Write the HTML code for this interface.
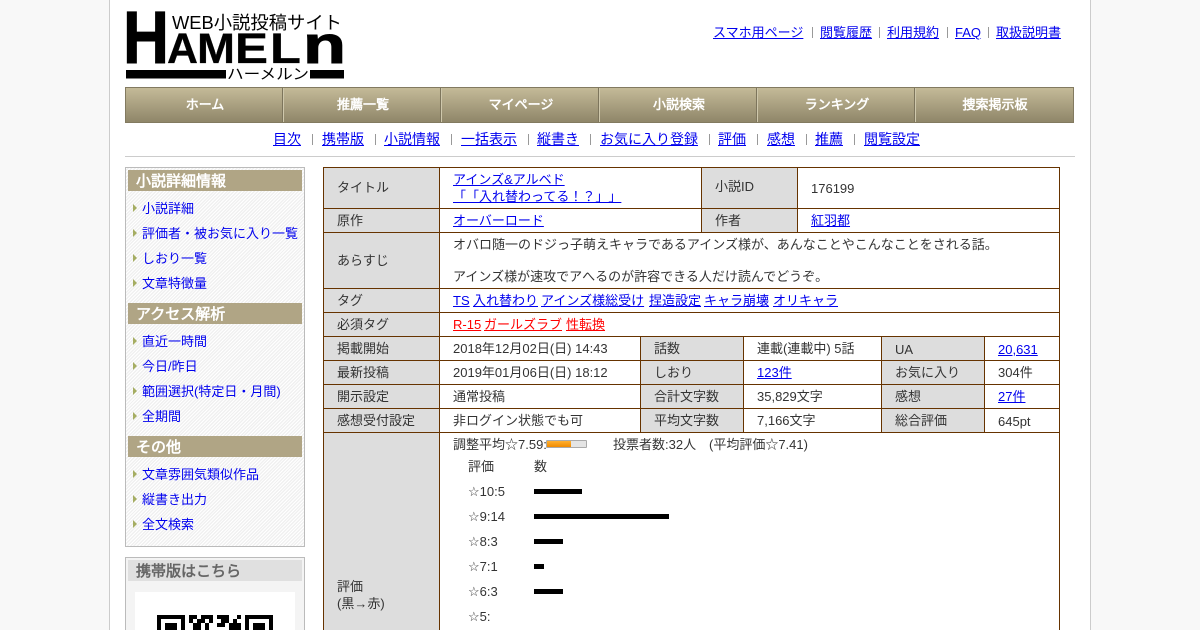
<!DOCTYPE html>
<html lang="ja"><head><meta charset="utf-8"><title>Hameln</title>
<style>
html,body{margin:0;padding:0;width:1200px;height:630px;overflow:hidden;background:#f8f8f8}
body{position:relative;font-family:"Liberation Sans","WenQuanYi Zen Hei",sans-serif;text-spacing-trim:space-all;font-size:13px;color:#333}
#w{position:absolute;left:109px;top:0;width:980px;height:630px;background:#fff;border-left:1px solid #ccc;border-right:1px solid #ccc}
.a,a.a,span.a{position:absolute;white-space:nowrap;line-height:16px;height:16px;margin-top:1px}
a.f{margin-top:0}
a[style*="text-decoration:none"]{margin-top:0}
a{color:#00e;text-decoration:underline}
.d{font-family:"Noto Sans CJK JP",sans-serif;line-height:0}
.r{position:absolute}
.s{position:absolute;width:1px;height:11px;background:#999}
.n{position:absolute;top:88px;height:34px;line-height:33px;width:154px;padding-left:2px;text-align:center;color:#fff;font-weight:bold;font-size:13px;border-left:1px solid #cfc8ac;border-right:1px solid #7d755c}
.f{font-size:14px}
.h{position:absolute;left:128px;width:174px;height:21px;line-height:23px;background:#b0a585;color:#fff;font-weight:bold;font-size:15px;text-indent:8px}
.ar{position:absolute;left:133px;width:0;height:0;border-left:4px solid #a5ad62;border-top:4px solid transparent;border-bottom:4px solid transparent}
.g{position:absolute;background:#ddd}
.l{position:absolute;background:#630}
.b{position:absolute;left:534px;height:5px;background:#000}
.q{position:absolute;background:#000}
</style></head><body>
<div id="w"></div>

<svg class="r" style="left:120px;top:5px" width="230" height="80" viewBox="120 5 230 80">
<g font-family="Liberation Sans" font-weight="bold" fill="#000" stroke="#000">
<text x="123" y="63" font-size="74" textLength="46" lengthAdjust="spacingAndGlyphs">H</text>
<text x="167" y="63" font-size="43" textLength="31" lengthAdjust="spacingAndGlyphs" stroke-width="0.3">A</text>
<text x="197" y="63" font-size="43" textLength="38" lengthAdjust="spacingAndGlyphs" stroke-width="0.3">M</text>
<text x="235" y="63" font-size="43" textLength="33" lengthAdjust="spacingAndGlyphs" stroke-width="0.3">E</text>
<text x="270" y="63" font-size="43" textLength="31" lengthAdjust="spacingAndGlyphs" stroke-width="0.3">L</text>
<text x="303" y="63" font-size="53" textLength="43" lengthAdjust="spacingAndGlyphs">n</text>
</g>
<text x="172" y="29" font-size="18" fill="#000" textLength="170" lengthAdjust="spacingAndGlyphs">WEB小説投稿サイト</text>
<rect x="126" y="70" width="100" height="8.5" fill="#000"/><rect x="310" y="70" width="34" height="8.5" fill="#000"/>
<text x="227" y="79" font-size="15" fill="#000" textLength="82" lengthAdjust="spacingAndGlyphs">ハーメルン</text>
</svg>

<a class="a" href="#" style="left:713px;top:24px">スマホ用ページ</a><i class="s" style="left:812px;top:27px"></i>
<a class="a" href="#" style="left:820px;top:24px">閲覧履歴</a><i class="s" style="left:879px;top:27px"></i>
<a class="a" href="#" style="left:887px;top:24px">利用規約</a><i class="s" style="left:947px;top:27px"></i>
<a class="a" href="#" style="left:955px;top:24px">FAQ</a><i class="s" style="left:988px;top:27px"></i>
<a class="a" href="#" style="left:996px;top:24px">取扱説明書</a>

<div class="r" style="left:125px;top:87px;width:947px;height:34px;border:1px solid #827a60;background:linear-gradient(#c4ba98,#8f8669)"></div>
<div class="n" style="left:125px;border-left-color:transparent">ホーム</div>
<div class="n" style="left:283px">推薦一覧</div>
<div class="n" style="left:441px">マイページ</div>
<div class="n" style="left:599px">小説検索</div>
<div class="n" style="left:757px">ランキング</div>
<div class="n" style="left:915px;border-right-color:transparent">捜索掲示板</div>

<a class="a f" href="#" style="left:273px;top:131px">目次</a><i class="s" style="left:312px;top:134px"></i>
<a class="a f" href="#" style="left:322px;top:131px">携帯版</a><i class="s" style="left:375px;top:134px"></i>
<a class="a f" href="#" style="left:384px;top:131px">小説情報</a><i class="s" style="left:451px;top:134px"></i>
<a class="a f" href="#" style="left:461px;top:131px">一括表示</a><i class="s" style="left:528px;top:134px"></i>
<a class="a f" href="#" style="left:537px;top:131px">縦書き</a><i class="s" style="left:590px;top:134px"></i>
<a class="a f" href="#" style="left:600px;top:131px">お気に入り登録</a><i class="s" style="left:709px;top:134px"></i>
<a class="a f" href="#" style="left:718px;top:131px">評価</a><i class="s" style="left:757px;top:134px"></i>
<a class="a f" href="#" style="left:767px;top:131px">感想</a><i class="s" style="left:806px;top:134px"></i>
<a class="a f" href="#" style="left:815px;top:131px">推薦</a><i class="s" style="left:854px;top:134px"></i>
<a class="a f" href="#" style="left:864px;top:131px">閲覧設定</a>
<div class="r" style="left:125px;top:156px;width:950px;height:1px;background:#ccc"></div>

<div class="r" style="left:125px;top:167px;width:178px;height:378px;border:1px solid #bbb;background:repeating-linear-gradient(135deg,#fff 0,#fff 1px,#f0f0f0 1px,#f0f0f0 2.4px)"></div>
<div class="h" style="top:170px">小説詳細情報</div>
<div class="h" style="top:303px">アクセス解析</div>
<div class="h" style="top:436px">その他</div>
<i class="ar" style="top:204px"></i><a class="a" href="#" style="left:142px;top:201px;text-decoration:none">小説詳細</a>
<i class="ar" style="top:229px"></i><a class="a" href="#" style="left:142px;top:226px;text-decoration:none">評価者<span class="d">・</span>被お気に入り一覧</a>
<i class="ar" style="top:254px"></i><a class="a" href="#" style="left:142px;top:251px;text-decoration:none">しおり一覧</a>
<i class="ar" style="top:279px"></i><a class="a" href="#" style="left:142px;top:276px;text-decoration:none">文章特徴量</a>
<i class="ar" style="top:337px"></i><a class="a" href="#" style="left:142px;top:334px;text-decoration:none">直近一時間</a>
<i class="ar" style="top:362px"></i><a class="a" href="#" style="left:142px;top:359px;text-decoration:none">今日/昨日</a>
<i class="ar" style="top:387px"></i><a class="a" href="#" style="left:142px;top:384px;text-decoration:none">範囲選択(特定日<span class="d">・</span>月間)</a>
<i class="ar" style="top:412px"></i><a class="a" href="#" style="left:142px;top:409px;text-decoration:none">全期間</a>
<i class="ar" style="top:470px"></i><a class="a" href="#" style="left:142px;top:467px;text-decoration:none">文章雰囲気類似作品</a>
<i class="ar" style="top:495px"></i><a class="a" href="#" style="left:142px;top:492px;text-decoration:none">縦書き出力</a>
<i class="ar" style="top:520px"></i><a class="a" href="#" style="left:142px;top:517px;text-decoration:none">全文検索</a>

<div class="r" style="left:125px;top:557px;width:178px;height:90px;border:1px solid #bbb;background:#f4f4f4"></div>
<div class="h" style="top:560px;background:#e0e0e0;color:#666">携帯版はこちら</div>
<div class="r" style="left:135px;top:592px;width:160px;height:60px;background:#fff"></div>
<div class="q" style="left:157px;top:615px;width:28px;height:15px"></div><div class="r" style="left:161px;top:619px;width:20px;height:11px;background:#fff"></div><div class="q" style="left:165px;top:623px;width:12px;height:7px"></div>
<div class="q" style="left:245px;top:615px;width:28px;height:15px"></div><div class="r" style="left:249px;top:619px;width:20px;height:11px;background:#fff"></div><div class="q" style="left:253px;top:623px;width:12px;height:7px"></div>
<div class="q" style="left:189px;top:615px;width:8px;height:4px"></div><div class="q" style="left:201px;top:615px;width:12px;height:4px"></div><div class="q" style="left:217px;top:615px;width:12px;height:4px"></div><div class="q" style="left:237px;top:615px;width:4px;height:4px"></div>
<div class="q" style="left:189px;top:619px;width:4px;height:4px"></div><div class="q" style="left:197px;top:619px;width:8px;height:4px"></div><div class="q" style="left:209px;top:619px;width:4px;height:4px"></div><div class="q" style="left:221px;top:619px;width:8px;height:4px"></div><div class="q" style="left:233px;top:619px;width:4px;height:4px"></div>
<div class="q" style="left:193px;top:623px;width:8px;height:7px"></div><div class="q" style="left:205px;top:623px;width:4px;height:7px"></div><div class="q" style="left:217px;top:623px;width:8px;height:4px"></div><div class="q" style="left:229px;top:623px;width:12px;height:7px"></div>

<!-- table -->
<div class="r" style="left:323px;top:167px;width:737px;height:463px;background:#fff"></div>
<div class="g" style="left:324px;top:168px;width:115px;height:462px"></div>
<div class="g" style="left:702px;top:168px;width:95px;height:64px"></div>
<div class="g" style="left:641px;top:337px;width:102px;height:95px"></div>
<div class="g" style="left:882px;top:337px;width:102px;height:95px"></div>

<div class="l" style="left:323px;top:167px;width:737px;height:1px"></div>
<div class="l" style="left:323px;top:208px;width:737px;height:1px"></div>
<div class="l" style="left:323px;top:232px;width:737px;height:1px"></div>
<div class="l" style="left:323px;top:288px;width:737px;height:1px"></div>
<div class="l" style="left:323px;top:312px;width:737px;height:1px"></div>
<div class="l" style="left:323px;top:336px;width:737px;height:1px"></div>
<div class="l" style="left:323px;top:360px;width:737px;height:1px"></div>
<div class="l" style="left:323px;top:384px;width:737px;height:1px"></div>
<div class="l" style="left:323px;top:408px;width:737px;height:1px"></div>
<div class="l" style="left:323px;top:432px;width:737px;height:1px"></div>
<div class="l" style="left:323px;top:167px;width:1px;height:463px"></div>
<div class="l" style="left:439px;top:167px;width:1px;height:463px"></div>
<div class="l" style="left:1059px;top:167px;width:1px;height:463px"></div>
<div class="l" style="left:701px;top:167px;width:1px;height:65px"></div>
<div class="l" style="left:797px;top:167px;width:1px;height:65px"></div>
<div class="l" style="left:640px;top:336px;width:1px;height:96px"></div>
<div class="l" style="left:743px;top:336px;width:1px;height:96px"></div>
<div class="l" style="left:881px;top:336px;width:1px;height:96px"></div>
<div class="l" style="left:984px;top:336px;width:1px;height:96px"></div>

<span class="a" style="left:337px;top:179px">タイトル</span>
<a class="a" href="#" style="left:453px;top:171px">アインズ&amp;アルベド</a>
<a class="a" href="#" style="left:453px;top:188px">「「入れ替わってる！？」」</a>
<span class="a" style="left:715px;top:178px">小説ID</span>
<span class="a" style="left:811px;top:180px">176199</span>
<span class="a" style="left:337px;top:212px">原作</span>
<a class="a" href="#" style="left:453px;top:212px">オーバーロード</a>
<span class="a" style="left:715px;top:212px">作者</span>
<a class="a" href="#" style="left:811px;top:212px">紅羽都</a>
<span class="a" style="left:337px;top:252px">あらすじ</span>
<span class="a" style="left:453px;top:236px">オバロ随一のドジっ子萌えキャラであるアインズ様が、あんなことやこんなことをされる話。</span>
<span class="a" style="left:453px;top:268px">アインズ様が速攻でアへるのが許容できる人だけ読んでどうぞ。</span>
<span class="a" style="left:337px;top:292px">タグ</span>
<a class="a" href="#" style="left:453px;top:292px">TS</a>
<a class="a" href="#" style="left:473px;top:292px">入れ替わり</a>
<a class="a" href="#" style="left:541px;top:292px">アインズ様総受け</a>
<a class="a" href="#" style="left:649px;top:292px">捏造設定</a>
<a class="a" href="#" style="left:704px;top:292px">キャラ崩壊</a>
<a class="a" href="#" style="left:773px;top:292px">オリキャラ</a>
<span class="a" style="left:337px;top:316px">必須タグ</span>
<a class="a" href="#" style="left:453px;top:316px;color:#f00">R-15</a>
<a class="a" href="#" style="left:484px;top:316px;color:#f00">ガールズラブ</a>
<a class="a" href="#" style="left:566px;top:316px;color:#f00">性転換</a>

<span class="a" style="left:337px;top:340px">掲載開始</span>
<span class="a" style="left:453px;top:340px">2018年12月02日(日) 14:43</span>
<span class="a" style="left:654px;top:340px">話数</span>
<span class="a" style="left:757px;top:340px">連載(連載中) 5話</span>
<span class="a" style="left:895px;top:341px">UA</span>
<a class="a" href="#" style="left:998px;top:341px">20,631</a>
<span class="a" style="left:337px;top:364px">最新投稿</span>
<span class="a" style="left:453px;top:364px">2019年01月06日(日) 18:12</span>
<span class="a" style="left:654px;top:364px">しおり</span>
<a class="a" href="#" style="left:757px;top:364px">123件</a>
<span class="a" style="left:895px;top:364px">お気に入り</span>
<span class="a" style="left:998px;top:364px">304件</span>
<span class="a" style="left:337px;top:388px">開示設定</span>
<span class="a" style="left:453px;top:388px">通常投稿</span>
<span class="a" style="left:654px;top:388px">合計文字数</span>
<span class="a" style="left:757px;top:388px">35,829文字</span>
<span class="a" style="left:895px;top:388px">感想</span>
<a class="a" href="#" style="left:998px;top:388px">27件</a>
<span class="a" style="left:337px;top:412px">感想受付設定</span>
<span class="a" style="left:453px;top:412px">非ログイン状態でも可</span>
<span class="a" style="left:654px;top:412px">平均文字数</span>
<span class="a" style="left:757px;top:412px">7,166文字</span>
<span class="a" style="left:895px;top:412px">総合評価</span>
<span class="a" style="left:998px;top:413px">645pt</span>

<span class="a" style="left:453px;top:436px">調整平均☆7.59:</span>
<div class="r" style="left:546px;top:440px;width:39px;height:6px;border:1px solid #aaa;background:#e4e4e4;border-radius:1px"></div>
<div class="r" style="left:547px;top:441px;width:24px;height:6px;background:linear-gradient(#ffb030,#f08a00)"></div>
<span class="a" style="left:613px;top:436px">投票者数:32人</span>
<span class="a" style="left:709px;top:436px">(平均評価☆7.41)</span>
<span class="a" style="left:468px;top:458px">評価</span><span class="a" style="left:534px;top:458px">数</span>
<span class="a" style="left:468px;top:483px">☆10:5</span><div class="b" style="top:489px;width:48px"></div>
<span class="a" style="left:468px;top:508px">☆9:14</span><div class="b" style="top:514px;width:135px"></div>
<span class="a" style="left:468px;top:533px">☆8:3</span><div class="b" style="top:539px;width:29px"></div>
<span class="a" style="left:468px;top:558px">☆7:1</span><div class="b" style="top:564px;width:10px"></div>
<span class="a" style="left:468px;top:583px">☆6:3</span><div class="b" style="top:589px;width:29px"></div>
<span class="a" style="left:468px;top:608px">☆5:</span>
<span class="a" style="left:337px;top:578px">評価</span>
<span class="a" style="left:337px;top:595px">(黒→赤)</span>
</body></html>
